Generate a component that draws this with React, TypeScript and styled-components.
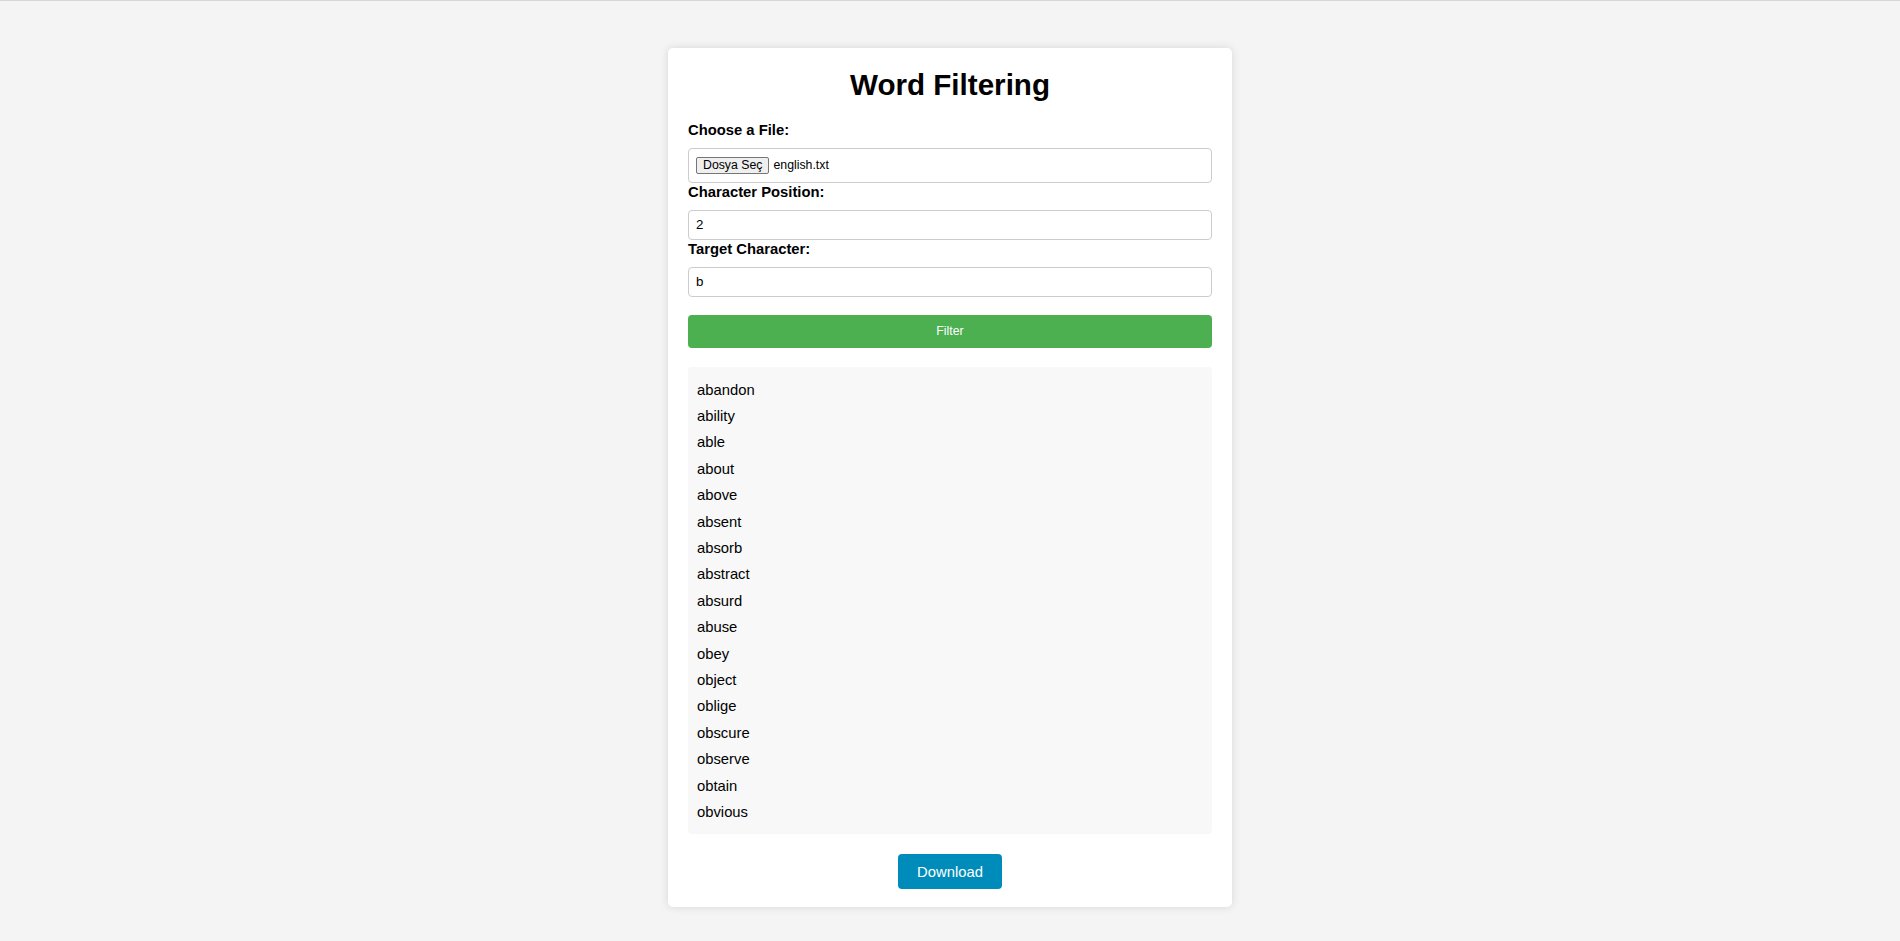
import React from "react";
import styled, { createGlobalStyle } from "styled-components";

const GlobalStyle = createGlobalStyle`
  html, body {
    margin: 0;
    padding: 0;
    background: #f4f4f4;
    font-family: "Liberation Sans", Arial, sans-serif;
  }
  * { box-sizing: border-box; }
`;

const Page = styled.div`
  min-height: 941px;
  border-top: 1px solid #d6d6d6;
  padding-top: 47px;
  display: flex;
  justify-content: center;
  align-items: flex-start;
`;

const Card = styled.div`
  width: 564px;
  background: #ffffff;
  border-radius: 5px;
  box-shadow: 0 0 9px rgba(0, 0, 0, 0.12);
  padding: 20px 20px 18px;
  display: flex;
  flex-direction: column;
`;

const Title = styled.h1`
  margin: 0;
  text-align: center;
  font-size: 29.6px;
  line-height: 34px;
  font-weight: bold;
  color: #000;
`;

const Label = styled.label<{ $top: number }>`
  display: block;
  margin-top: ${(p) => p.$top}px;
  margin-bottom: 8.5px;
  font-size: 14.8px;
  line-height: 17px;
  font-weight: bold;
  color: #000;
`;

const FileBox = styled.div`
  height: 35px;
  border: 1px solid #cccccc;
  border-radius: 4px;
  padding: 0 7px;
  display: flex;
  align-items: center;
  gap: 4px;
  font-size: 12.3px;
  color: #000;
`;

const FileButton = styled.span`
  display: inline-flex;
  align-items: center;
  height: 17px;
  padding: 0 6px;
  background: #efefef;
  border: 1px solid #767676;
  border-radius: 2px;
  font-size: 12.3px;
  color: #000;
`;

const TextInput = styled.input`
  display: block;
  width: 100%;
  height: 30px;
  border: 1px solid #cccccc;
  border-radius: 4px;
  padding: 0 7px;
  font-family: "Liberation Sans", Arial, sans-serif;
  font-size: 13.3px;
  color: #000;
  background: #fff;
  outline: none;
`;

const FilterButton = styled.button`
  margin-top: 18px;
  height: 33px;
  width: 100%;
  border: none;
  border-radius: 4px;
  background: #4caf50;
  color: #ffffff;
  font-family: "Liberation Sans", Arial, sans-serif;
  font-size: 12.3px;
  cursor: pointer;
`;

const WordList = styled.div`
  margin-top: 19px;
  background: #f8f8f8;
  border-radius: 4px;
  padding: 10px 9px 9px;
  display: flex;
  flex-direction: column;
`;

const Word = styled.div`
  font-size: 14.8px;
  line-height: 26.4px;
  color: #000;
`;

const DownloadRow = styled.div`
  margin-top: 20px;
  display: flex;
  justify-content: center;
`;

const DownloadButton = styled.button`
  height: 35px;
  padding: 0 19px;
  border: none;
  border-radius: 4px;
  background: #008cba;
  color: #ffffff;
  font-family: "Liberation Sans", Arial, sans-serif;
  font-size: 14.8px;
  cursor: pointer;
`;

const words = [
  "abandon",
  "ability",
  "able",
  "about",
  "above",
  "absent",
  "absorb",
  "abstract",
  "absurd",
  "abuse",
  "obey",
  "object",
  "oblige",
  "obscure",
  "observe",
  "obtain",
  "obvious",
];

export default function App() {
  return (
    <>
      <GlobalStyle />
      <Page>
        <Card>
          <Title>Word Filtering</Title>
          <Label $top={20}>Choose a File:</Label>
          <FileBox>
            <FileButton>Dosya Seç</FileButton>
            <span>english.txt</span>
          </FileBox>
          <Label $top={1.5}>Character Position:</Label>
          <TextInput defaultValue="2" />
          <Label $top={1.5}>Target Character:</Label>
          <TextInput defaultValue="b" />
          <FilterButton>Filter</FilterButton>
          <WordList>
            {words.map((w) => (
              <Word key={w}>{w}</Word>
            ))}
          </WordList>
          <DownloadRow>
            <DownloadButton>Download</DownloadButton>
          </DownloadRow>
        </Card>
      </Page>
    </>
  );
}
